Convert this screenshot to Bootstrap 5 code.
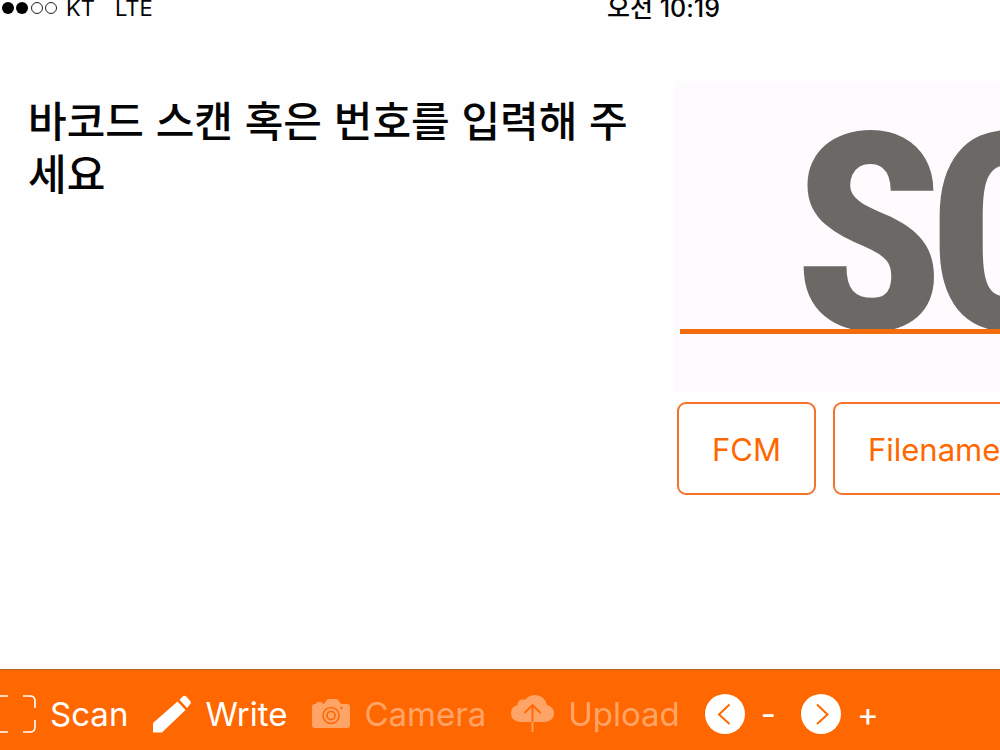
<!DOCTYPE html>
<html lang="ko">
<head>
<meta charset="utf-8">
<meta name="viewport" content="width=device-width, initial-scale=1">
<title>Scan</title>
<link rel="stylesheet" href="https://cdn.jsdelivr.net/npm/bootstrap@5.3.0/dist/css/bootstrap.min.css">
<style>
  :root { --brand: #ff6700; }
  body { background: #fefefe; color: #050505; font-family: Inter, "Noto Sans CJK KR", sans-serif; overflow: hidden; }
  .status-bar { height: 24px; font-size: 22px; line-height: 17px; }
  .status-side { flex: 0 0 60.7%; gap: 20px; }
  .status-time { font-weight: 500; font-size: 25px; }
  .message-pane { flex: 0 0 67.4%; padding: 68px 28px 0; }
  .message-pane h1 { font: 500 42px/53px "Noto Sans CJK KR", sans-serif; margin: 0; word-break: break-all; }
  .brand-pane { padding-top: 58px; min-width: 0; }
  .brand-box { background: #fdfbfe; height: 310px; padding: 0 0 58px 6px; }
  .brand-word { height: 252px; border-bottom: 5px solid #f56c0c; padding-left: 114px; color: #6a6965; font: 800 276px/306px "Roboto Condensed", "Liberation Sans Narrow", sans-serif; }
  .brand-word span + span { margin-left: -16px; }
  .tag-row { gap: 17px; padding: 10px 0 0 3px; }
  .tag-btn { height: 93px; padding: 4px 33px 0; font-size: 31px; border: 2px solid #f4732c; border-radius: 9px; color: var(--brand); background: #fff; }
  .tool-bar { height: 81px; background: var(--brand); border-top: 1px solid #b9622a; padding-top: 8px; }
  .tool-btn { color: #fff; font-size: 33px; line-height: 40px; padding: 0; border: 0; gap: 14px; margin-right: 25px; }
  .tool-btn:hover, .tool-btn:disabled { color: #fff; border: 0; }
  .tool-btn:disabled { color: #ffa467; opacity: 1; }
  .tool-btn.step { gap: 16px; }
  .tool-btn svg { flex: none; }
</style>
</head>
<body>
<div class="d-flex flex-column vh-100">
  <header class="status-bar d-flex text-nowrap">
    <div class="status-side d-flex">
      <div class="d-flex">
        <svg width="66" height="16" viewBox="0 0 66 16" aria-label="Signal"><circle cx="8" cy="8" r="6"/><circle cx="22" cy="8" r="6"/><circle cx="37" cy="8" r="5.500" fill="none" stroke="#222"/><circle cx="51" cy="8" r="5.500" fill="none" stroke="#222"/></svg>
        <span>KT</span>
      </div>
      <span>LTE</span>
    </div>
    <div class="status-time">오전 10:19</div>
  </header>

  <main class="d-flex flex-grow-1 overflow-hidden">
    <section class="message-pane">
      <h1>바코드 스캔 혹은 번호를 입력해 주세요</h1>
    </section>
    <section class="brand-pane flex-grow-1 overflow-hidden">
      <div class="brand-box">
        <div class="brand-word d-flex overflow-hidden text-nowrap"><span>S</span><span>C</span></div>
      </div>
      <div class="tag-row d-flex">
        <button type="button" class="btn tag-btn flex-shrink-0">FCM</button>
        <button type="button" class="btn tag-btn flex-shrink-0">Filename</button>
      </div>
    </section>
  </main>

  <footer class="tool-bar d-flex align-items-center text-nowrap overflow-hidden flex-shrink-0">
    <button type="button" class="btn tool-btn d-flex align-items-center">
      <svg width="36" height="40" viewBox="3 0 36 40" fill="none" stroke="#fff" stroke-width="1.600"><path d="M-3 14V7q0-5 5-5h9M26 2h7q5 0 5 5v7M38 26v7q0 5-5 5h-7M11 38H2q-5 0-5-5v-7"/></svg>
      <span>Scan</span>
    </button>
    <button type="button" class="btn tool-btn d-flex align-items-center">
      <svg width="38" height="40" viewBox="0 0 38 40" fill="#fff"><path d="M0 38.500V29L24.500 7.500l8 8.500L9 38.500zM26.500 5.800L30 2.300q1.600-1.200 3.200.2l4 4.400q1.300 1.600 0 3.200l-3.100 4z"/></svg>
      <span>Write</span>
    </button>
    <button type="button" class="btn tool-btn d-flex align-items-center" disabled>
      <svg width="38" height="40" viewBox="0 0 38 40"><path fill="#ffa467" d="M3 10h1q0-2 2-2h3q2 0 2 2 1.500 0 2.500-2 1-3 4-3h6q3 0 4 3 1 2 3 2h4.500q3 0 3 3v18q0 3-3 3H3q-3 0-3-3V13q0-3 3-3z"/><circle cx="19" cy="21.500" r="8" fill="none" stroke="#ff6700" stroke-width="1.500"/><circle cx="19" cy="21.500" r="4" fill="none" stroke="#ff6700" stroke-width="1.600"/><circle cx="29.500" cy="14" r="1.200" fill="#ff6700"/></svg>
      <span>Camera</span>
    </button>
    <button type="button" class="btn tool-btn d-flex align-items-center" disabled>
      <svg width="43" height="40" viewBox="0 0 43 40" fill="none"><path fill="#ffa467" d="M9 28Q0 27 0 19.500 0 12 6.500 11q0-6 6-5.500h2Q17.500 1 24 1q9 0 12 10 7 2 7 8.500 0 7.500-9 8.500z"/><path stroke="#ff6700" stroke-width="1.800" d="M21.500 28V12M13.500 19l8-8 8 8"/><path stroke="#ffa467" stroke-width="1.800" d="M21.500 28v10"/></svg>
      <span>Upload</span>
    </button>
    <button type="button" class="btn tool-btn step d-flex align-items-center" aria-label="Previous">
      <svg width="40" height="40" viewBox="0 0 40 40" fill="none"><circle cx="20" cy="20" r="20" fill="#fff"/><path stroke="#ff6700" stroke-width="2" d="M24.500 10.500L14 20.500l10.500 9.500"/></svg>
      <span>-</span>
    </button>
    <button type="button" class="btn tool-btn step d-flex align-items-center" aria-label="Next">
      <svg width="40" height="40" viewBox="0 0 40 40" fill="none"><circle cx="20" cy="20" r="20" fill="#fff"/><path stroke="#ff6700" stroke-width="2" d="M16 10.500l10.500 10L16 30"/></svg>
      <span>+</span>
    </button>
  </footer>
</div>
<script src="https://cdn.jsdelivr.net/npm/bootstrap@5.3.0/dist/js/bootstrap.bundle.min.js"></script>
</body>
</html>
